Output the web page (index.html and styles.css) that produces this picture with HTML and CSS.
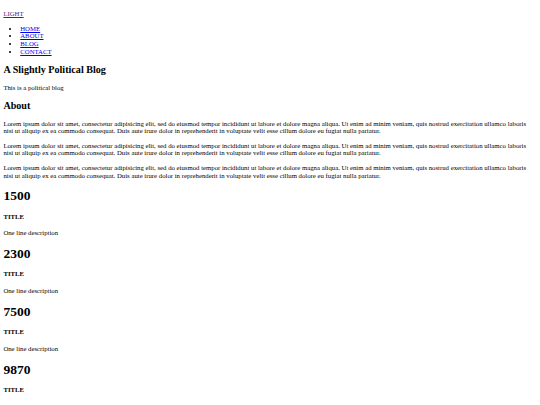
FILE: index.html
```html
<!DOCTYPE html>
<html>
<head>
<meta charset="utf-8">
<link rel="stylesheet" href="styles.css">
</head>
<body class="page">
<header class="site-header">
  <p class="brand"><a class="brand-link" href="#">LIGHT</a></p>
  <ul class="menu">
    <li><a class="menu-link" href="#">HOME</a></li>
    <li><a class="menu-link" href="#">ABOUT</a></li>
    <li><a class="menu-link" href="#">BLOG</a></li>
    <li><a class="menu-link" href="#">CONTACT</a></li>
  </ul>
</header>
<section class="intro">
  <h2 class="heading">A Slightly Political Blog</h2>
  <p class="text">This is a political blog</p>
</section>
<section class="about">
  <h2 class="heading">About</h2>
  <p class="text">Lorem ipsum dolor sit amet, consectetur adipisicing elit, sed do eiusmod tempor incididunt ut labore et dolore magna aliqua. Ut enim ad minim veniam, quis nostrud exercitation ullamco laboris nisi ut aliquip ex ea commodo consequat. Duis aute irure dolor in reprehenderit in voluptate velit esse cillum dolore eu fugiat nulla pariatur.</p>
  <p class="text">Lorem ipsum dolor sit amet, consectetur adipisicing elit, sed do eiusmod tempor incididunt ut labore et dolore magna aliqua. Ut enim ad minim veniam, quis nostrud exercitation ullamco laboris nisi ut aliquip ex ea commodo consequat. Duis aute irure dolor in reprehenderit in voluptate velit esse cillum dolore eu fugiat nulla pariatur.</p>
  <p class="text">Lorem ipsum dolor sit amet, consectetur adipisicing elit, sed do eiusmod tempor incididunt ut labore et dolore magna aliqua. Ut enim ad minim veniam, quis nostrud exercitation ullamco laboris nisi ut aliquip ex ea commodo consequat. Duis aute irure dolor in reprehenderit in voluptate velit esse cillum dolore eu fugiat nulla pariatur.</p>
</section>
<section class="stats">
  <div class="stat">
    <h1 class="stat-number">1500</h1>
    <h4 class="stat-title">TITLE</h4>
    <p class="text">One line description</p>
  </div>
  <div class="stat">
    <h1 class="stat-number">2300</h1>
    <h4 class="stat-title">TITLE</h4>
    <p class="text">One line description</p>
  </div>
  <div class="stat">
    <h1 class="stat-number">7500</h1>
    <h4 class="stat-title">TITLE</h4>
    <p class="text">One line description</p>
  </div>
  <div class="stat">
    <h1 class="stat-number">9870</h1>
    <h4 class="stat-title">TITLE</h4>
    <p class="text">One line description</p>
  </div>
</section>
</body>
</html>
```
FILE: styles.css
```css
html {
  font-family: "Liberation Serif", "Times New Roman", serif;
  font-size: 6.75px;
  line-height: 1.14;
  color: #000;
  background: #fff;
}
.page {
  margin: 0.5rem;
}
.brand {
  margin: 1em 0;
}
.brand-link {
  color: #551a8b;
}
.menu {
  margin: 1em 0;
  padding-left: 2.5em;
}
.menu-link {
  color: #0000ee;
}
.heading {
  font-size: 1.5em;
  margin: 0.83em 0;
}
.text {
  margin: 1em 0;
}
.stat-number {
  font-size: 2em;
  margin: 0.67em 0;
}
.stat-title {
  font-size: 1em;
  margin: 1.33em 0;
}
```
